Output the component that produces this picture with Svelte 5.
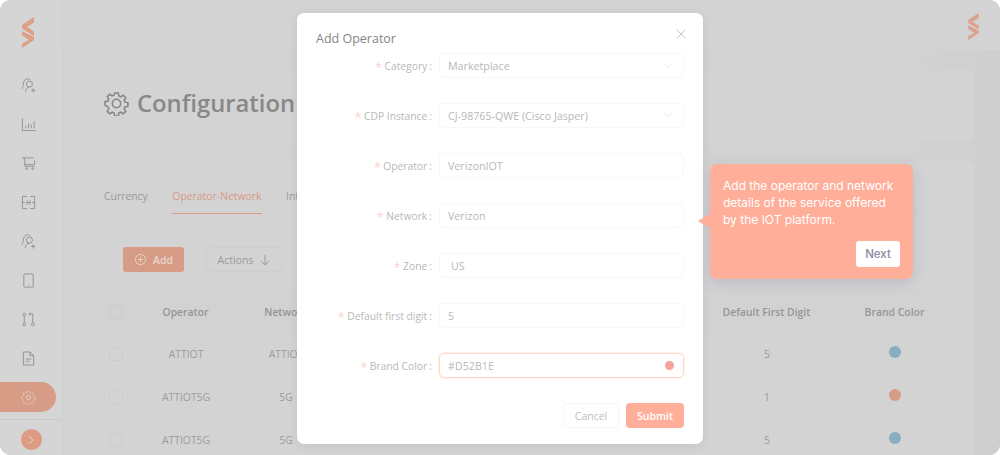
<script>
	const navIcons = [
		'people', 'chart', 'cart', 'scan', 'people', 'phone', 'pulls', 'doc', 'gear'
	];

	const fields = [
		{ label: 'Category', value: 'Marketplace', select: true },
		{ label: 'CDP Instance', value: 'CJ-98765-QWE (Cisco Jasper)', select: true },
		{ label: 'Operator', value: 'VerizonIOT' },
		{ label: 'Network', value: 'Verizon' },
		{ label: 'Zone', value: 'US', indent: true },
		{ label: 'Default first digit', value: '5' },
		{ label: 'Brand Color', value: '#D52B1E', color: true }
	];

	const rows = [
		{ operator: 'ATTIOT', network: 'ATTIOT', digit: '5', dot: '#8aadc3' },
		{ operator: 'ATTIOT5G', network: '5G', digit: '1', dot: '#d89b85' },
		{ operator: 'ATTIOT5G', network: '5G', digit: '5', dot: '#8aadc3' }
	];

	const gearPath = 'M10.3 2h3.4l.6 2.8 1.8.8 2.4-1.5 2.4 2.4-1.5 2.4.8 1.8 2.8.6v3.4l-2.8.6-.8 1.8 1.5 2.4-2.4 2.4-2.4-1.5-1.8.8-.6 2.8h-3.4l-.6-2.8-1.8-.8-2.4 1.5-2.4-2.4 1.5-2.4-.8-1.8L1 13.7v-3.4l2.8-.6.8-1.8-1.5-2.4 2.4-2.4 2.4 1.5 1.8-.8z';
</script>

{#snippet logo(cls)}
	<svg class={cls} viewBox="0 0 12 31" aria-hidden="true">
		<path d="M12 0 0 8v3.5L12 19v-4.5L5 10l7-4.5z" />
		<path d="M0 14v4.500l7 4.500-7 3.500V31l12-8v-3z" />
	</svg>
{/snippet}

{#snippet navIcon(name)}
	<svg class="nav-icon" viewBox="0 0 16 16" aria-hidden="true">
		{#if name === 'people'}
			<circle cx="9" cy="6.500" r="3.200" />
			<path d="M4.500 15c.3-2.700 2-4.800 4.500-5.300M.8 11.500c1.200-1.300 1.400-3 1.600-4.900C2.700 3.200 4.500.9 7 .9c1.300 0 2.500.6 3.200 1.600M13 11v4.500M10.800 13.200h4.500" />
		{:else if name === 'chart'}
			<path d="M1.500 1.500v13h14M5 12V9M8 12V6.500M11 12V8M14 12V4.500" />
		{:else if name === 'cart'}
			<path d="M1 2h12.500M3 2l1 2.500v6.500h10.500M14.500 4.500v4.500H4" />
			<circle cx="6" cy="13.500" r="1" />
			<circle cx="12.500" cy="13.500" r="1" />
		{:else if name === 'scan'}
			<path d="M6.500 1.500h-5v13h5M9.500 1.500h5v13h-5M1.500 8h3M6.500 8h3M11.500 8h3M6.500 5.500v5M9.500 5.500v5" />
		{:else if name === 'phone'}
			<rect x="3" y="1" width="10" height="14" rx="1" />
			<path d="M7.500 12.500h1" />
		{:else if name === 'pulls'}
			<circle cx="3.500" cy="2.800" r="1.500" />
			<circle cx="3.500" cy="13.200" r="1.500" />
			<circle cx="12.500" cy="13.200" r="1.500" />
			<path d="M3.500 4.300v7.400M12.500 11.700V2H8.500M10 .8 8.500 2 10 3.200" />
		{:else if name === 'doc'}
			<path d="M2.500 1h7l4 4v10h-11zM9.500 1v4h4M5 8.500h6M5 11h4" />
		{:else}
			<path transform="scale(.667)" d={gearPath} />
			<circle cx="8" cy="8" r="2.300" />
		{/if}
	</svg>
{/snippet}

<div class="app">
	<aside class="sidebar">
		{@render logo('logo')}
		<nav>
			{#each navIcons as name, i}
				<div class="nav-item" class:active={i === navIcons.length - 1}>
					{@render navIcon(name)}
				</div>
			{/each}
		</nav>
		<div class="collapse">
			<span class="collapse-btn">
				<svg viewBox="0 0 10 10" aria-hidden="true"><path d="M3 1l4 4-4 4" /></svg>
			</span>
		</div>
	</aside>

	<div class="main">
		<header class="topbar">
			{@render logo('logo-small')}
		</header>
		<div class="content">
			<section class="title-card">
				<svg class="title-gear" viewBox="0 0 24 24" aria-hidden="true">
					<path d={gearPath} />
					<circle cx="12" cy="12" r="4" />
				</svg>
				<h1>Configuration</h1>
			</section>

			<section class="table-card">
				<div class="tabs">
					<span>Currency</span>
					<span class="tab-active">Operator-Network</span>
					<span>Integration</span>
				</div>
				<div class="toolbar">
					<button class="add">
						<svg viewBox="0 0 14 14" aria-hidden="true">
							<circle cx="7" cy="7" r="5.500" />
							<path d="M7 4.200v5.600M4.200 7h5.600" />
						</svg>
						Add
					</button>
					<button class="actions">
						Actions
						<svg viewBox="0 0 12 12" aria-hidden="true"><path d="M6 1v10M2 7l4 4 4-4" /></svg>
					</button>
				</div>
				<div class="table">
					<div class="row head">
						<span class="check"></span>
						<span class="cell sep">Operator</span>
						<span class="cell">Network</span>
						<span class="cell"></span>
						<span class="cell sep">Default First Digit</span>
						<span class="cell">Brand Color</span>
					</div>
					{#each rows as row}
						<div class="row">
							<span class="check"></span>
							<span class="cell">{row.operator}</span>
							<span class="cell">{row.network}</span>
							<span class="cell"></span>
							<span class="cell">{row.digit}</span>
							<span class="cell"><i class="dot" style="background: {row.dot}"></i></span>
						</div>
					{/each}
				</div>
			</section>
		</div>
	</div>

	<div class="modal">
		<div class="modal-head">
			<h2>Add Operator</h2>
			<svg class="close" viewBox="0 0 10 10" aria-hidden="true"><path d="M.5.5l9 9M9.500.5l-9 9" /></svg>
		</div>
		<div class="form">
			{#each fields as field}
				<div class="field">
					<div class="label"><span class="star">*</span> {field.label}<span class="colon">:</span></div>
					<div class="input" class:focus={field.color} class:indent={field.indent}>
						<span>{field.value}</span>
						{#if field.select}
							<svg class="chevron" viewBox="0 0 10 6" aria-hidden="true"><path d="M.5.5 5 5 9.500.5" /></svg>
						{/if}
						{#if field.color}
							<i class="swatch"></i>
						{/if}
					</div>
				</div>
			{/each}
		</div>
		<div class="modal-foot">
			<button class="cancel">Cancel</button>
			<button class="submit">Submit</button>
		</div>
	</div>

	<div class="tip">
		<p>Add the operator and network details of the service offered by the IOT platform.</p>
		<div class="tip-foot"><button class="next">Next</button></div>
	</div>
</div>

<style>
	:global(body) {
		margin: 0;
		background: #fff;
	}

	.app {
		position: relative;
		display: flex;
		width: 1000px;
		height: 455px;
		overflow: hidden;
		border-radius: 11px;
		background: #d3d3d3;
		font-family: "Open Sans", "Noto Sans", sans-serif;
		color: #a0a0a0;
	}

	svg {
		fill: none;
		stroke: currentColor;
	}

	button {
		font-family: inherit;
		cursor: pointer;
	}

	/* sidebar */
	.sidebar {
		display: flex;
		flex-direction: column;
		flex: 0 0 62px;
		background: #d5d5d5;
	}

	.logo {
		display: block;
		width: 12px;
		height: 31px;
		margin: 17px 0 0 22px;
		fill: #dd9f88;
		stroke: none;
	}

	nav {
		display: flex;
		flex-direction: column;
		margin-top: 22px;
	}

	.nav-item {
		display: flex;
		align-items: center;
		justify-content: center;
		width: 56px;
		height: 30px;
		margin-bottom: 9px;
		color: #8b8b8b;
	}

	.nav-item.active {
		margin-bottom: 0;
		border-radius: 0 15px 15px 0;
		background: #d79c86;
		color: #ebd6cc;
	}

	.nav-icon {
		width: 15px;
		height: 15px;
		stroke-width: .9;
	}

	.collapse {
		display: flex;
		justify-content: center;
		margin-top: 7px;
		padding: 9px 0 0;
		border-top: 1px solid #cbcbcb;
	}

	.collapse-btn {
		display: flex;
		align-items: center;
		justify-content: center;
		width: 21px;
		height: 21px;
		border-radius: 50%;
		background: #dd9b84;
		color: #ecd7cd;
	}

	.collapse-btn svg {
		width: 10px;
		height: 10px;
	}

	/* main */
	.main {
		display: flex;
		flex-direction: column;
		flex: 1;
		min-width: 0;
	}

	.topbar {
		display: flex;
		justify-content: flex-end;
		flex: 0 0 50px;
		box-sizing: border-box;
		padding: 13px 21px 0 0;
		background: #d3d3d3;
	}

	.logo-small {
		width: 11px;
		height: 27px;
		fill: #dba28d;
		stroke: none;
	}

	.content {
		display: flex;
		flex-direction: column;
		flex: 1;
		gap: 17px;
		padding: 19px 25px 0 23px;
		background: linear-gradient(90deg, #d2d2d2 0, #d2d2d2 90%, #cfcfcf 100%);
	}

	.title-card {
		display: flex;
		align-items: center;
		flex: 0 0 74px;
		box-sizing: border-box;
		padding: 0 0 6px 18px;
		border: 1px solid #d0d0d0;
		border-radius: 6px;
		background: #d3d3d3;
	}

	.title-gear {
		width: 25px;
		height: 25px;
		margin-right: 8px;
		color: #878787;
		stroke-width: 1.500;
	}

	h1 {
		margin: 0;
		font-size: 23.800px;
		font-weight: 600;
		line-height: 30px;
		color: #888;
	}

	.table-card {
		flex: 1;
		box-sizing: border-box;
		padding: 0 19px 0 18px;
		border: 1px solid #d0d0d0;
		border-bottom: 0;
		border-radius: 6px 6px 0 0;
		background: #d3d3d3;
	}

	.tabs {
		display: flex;
		gap: 24.500px;
		height: 52px;
		border-bottom: 1px solid #d0d0d0;
		font-size: 10.400px;
		color: #9a9a9a;
	}

	.tabs span {
		box-sizing: border-box;
		height: 53px;
		padding-top: 28px;
		line-height: 15px;
	}

	.tab-active {
		border-bottom: 1.500px solid #d99a84;
		color: #d99a84;
	}

	.toolbar {
		display: flex;
		align-items: flex-start;
		gap: 22px;
		box-sizing: border-box;
		height: 75px;
		padding: 33px 0 0 18px;
		border: 1px solid #d0d0d0;
		border-top: 0;
		border-radius: 0 0 6px 6px;
	}

	.add, .actions {
		display: flex;
		align-items: center;
		justify-content: center;
		height: 25px;
		padding: 0;
		border-radius: 3px;
		font-size: 10.500px;
	}

	.add {
		gap: 6px;
		width: 61px;
		border: 0;
		background: #d79c86;
		color: #ead5cb;
		font-weight: 600;
	}

	.add svg {
		width: 13px;
		height: 13px;
	}

	.actions {
		gap: 6px;
		width: 77px;
		border: 1px solid #cecece;
		background: transparent;
		color: #9a9a9a;
	}

	.actions svg {
		width: 12px;
		height: 12px;
	}

	.table {
		margin-top: 2px;
	}

	.row {
		display: grid;
		grid-template-columns: 26px 112px 88px 374px 126px 129px;
		box-sizing: border-box;
		height: 43px;
		border-bottom: 1px solid #d0d0d0;
		font-size: 10.400px;
		color: #9c9c9c;
	}

	.head {
		height: 42px;
		font-weight: 600;
		color: #959595;
		background: #d2d2d2;
	}

	.check {
		align-self: center;
		width: 12px;
		height: 12px;
		margin-left: 5px;
		border: 1px solid #cdcdcd;
		border-radius: 2px;
	}

	.cell {
		display: flex;
		align-items: center;
		justify-content: center;
	}

	.sep {
		border-right: 1px solid #cfcfcf;
		margin: 12px 0;
	}

	.dot {
		display: block;
		width: 12px;
		height: 12px;
		margin-bottom: 4px;
		border-radius: 50%;
	}

	/* modal */
	.modal {
		position: absolute;
		top: 13px;
		left: 297px;
		box-sizing: border-box;
		width: 406px;
		height: 431px;
		padding: 0 19px;
		border-radius: 7px;
		background: #fff;
		box-shadow: 0 2px 10px rgba(0, 0, 0, .08);
	}

	.modal-head {
		display: flex;
		justify-content: space-between;
		height: 40px;
	}

	h2 {
		margin: 17px 0 0;
		font-size: 12.500px;
		font-weight: 400;
		line-height: 17px;
		color: #858585;
	}

	.close {
		width: 10px;
		height: 10px;
		margin: 16px -2px 0 0;
		color: #c5c5c5;
	}

	.form {
		display: flex;
		flex-direction: column;
		gap: 25px;
	}

	.field {
		display: grid;
		grid-template-columns: 116px 245px;
		column-gap: 7px;
		height: 25px;
	}

	.label {
		align-self: center;
		font-size: 10.300px;
		text-align: right;
		white-space: nowrap;
		color: #b8b8b8;
	}

	.star {
		position: relative;
		top: 2px;
		color: #ffd0c9;
		font-size: 12px;
		line-height: 1;
	}

	.colon {
		margin-left: 2px;
	}

	.input {
		display: flex;
		align-items: center;
		justify-content: space-between;
		box-sizing: border-box;
		padding: 0 9px 0 8px;
		border: 1px solid #f7f7f7;
		border-radius: 5px;
		font-size: 10.700px;
		color: #b8b8b8;
	}

	.input.indent {
		padding-left: 11px;
	}

	.input.focus {
		border-color: #ffd9cb;
		box-shadow: 0 0 0 1px #fff1ec;
	}

	.chevron {
		width: 9px;
		height: 5px;
		margin-right: 1px;
		color: #e4e4e4;
	}

	.swatch {
		display: block;
		width: 9px;
		height: 9px;
		border-radius: 50%;
		background: #f7a29c;
	}

	.modal-foot {
		display: flex;
		justify-content: flex-end;
		gap: 7px;
		margin-top: 25px;
	}

	.cancel, .submit {
		height: 25px;
		padding: 0;
		border-radius: 4px;
		font-size: 10.500px;
	}

	.cancel {
		width: 56px;
		border: 1px solid #f6f6f6;
		background: #fff;
		color: #bdbdbd;
	}

	.submit {
		width: 58px;
		border: 0;
		background: #ffae9a;
		color: #fff;
		font-weight: 600;
	}

	/* tour tooltip */
	.tip {
		position: absolute;
		top: 164px;
		left: 710px;
		box-sizing: border-box;
		width: 203px;
		height: 115px;
		padding: 13px 13px 12px;
		border-radius: 7px;
		background: #ffae9a;
		box-shadow: 0 3px 14px rgba(120, 125, 170, .28);
		color: #fff;
	}

	.tip::before {
		content: "";
		position: absolute;
		top: 50px;
		left: -12px;
		border-width: 7px 12px 7px 0;
		border-style: solid;
		border-color: transparent #ffae9a transparent transparent;
	}

	p {
		margin: 0;
		font-family: "Inter", "Open Sans", sans-serif;
		font-size: 12px;
		line-height: 17px;
	}

	.tip-foot {
		display: flex;
		justify-content: flex-end;
		margin-top: 13px;
	}

	.next {
		width: 44px;
		height: 26px;
		padding: 0;
		border: 0;
		border-radius: 3px;
		background: #fff;
		color: #8c8aa6;
		font-family: "Inter", "Open Sans", sans-serif;
		font-size: 11.500px;
		font-weight: 500;
	}
</style>
